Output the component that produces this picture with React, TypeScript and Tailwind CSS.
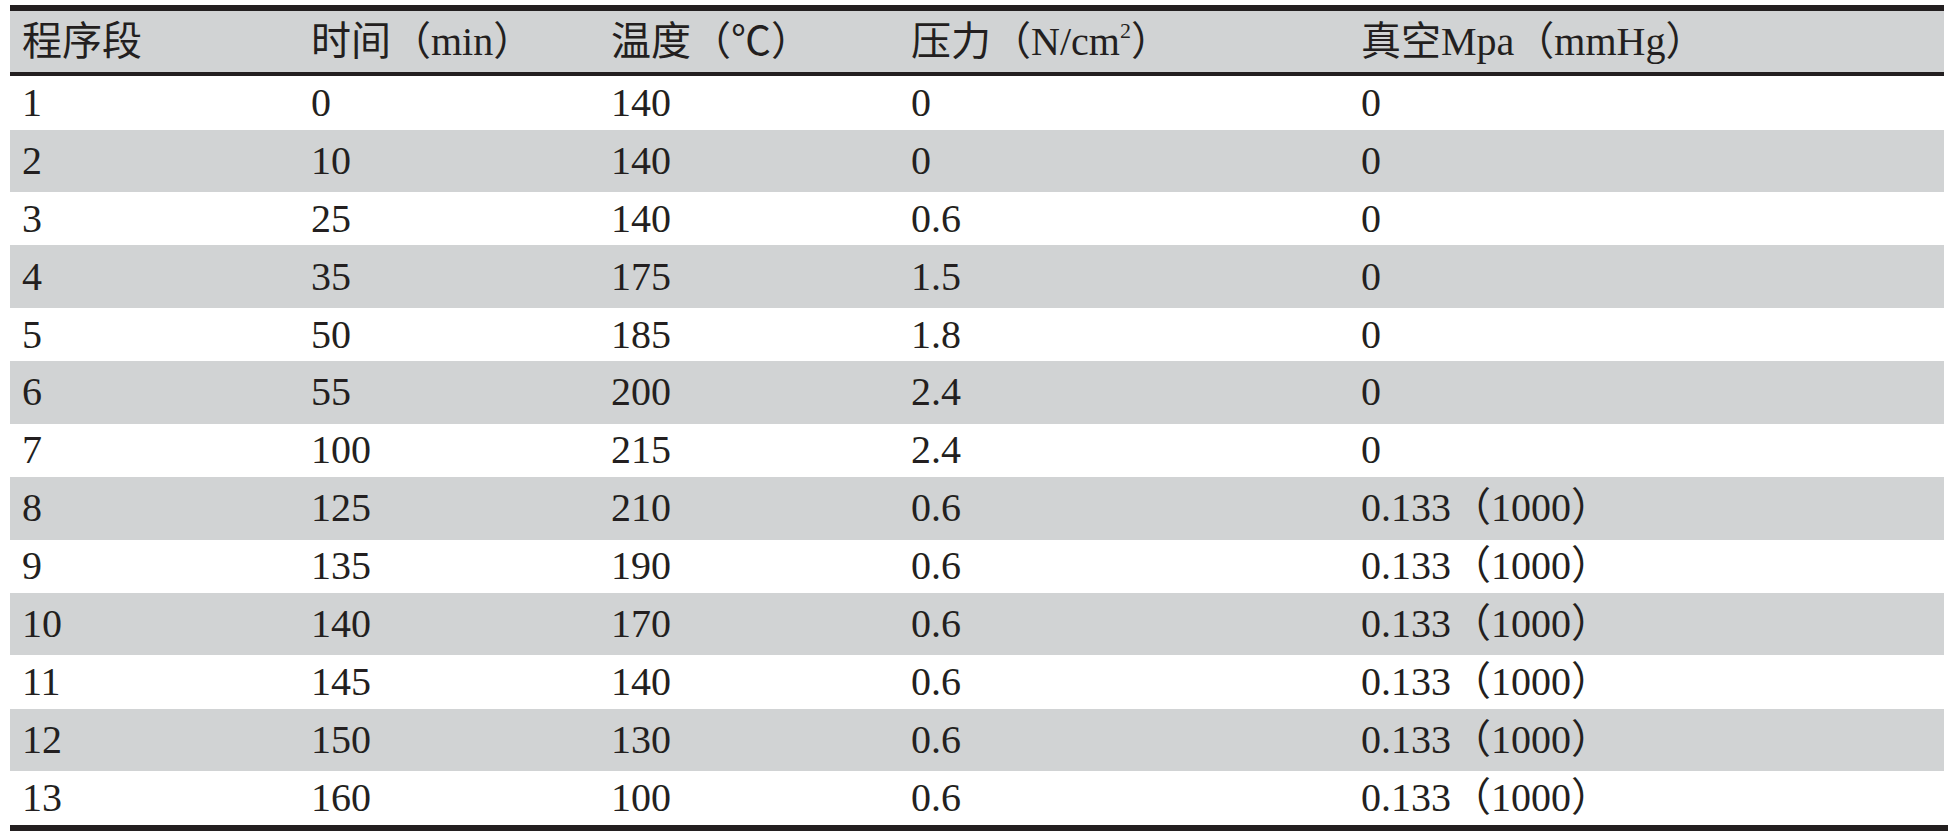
import React from "react";

const rows: [string, string, string, string, string][] = [
  ["1", "0", "140", "0", "0"],
  ["2", "10", "140", "0", "0"],
  ["3", "25", "140", "0.6", "0"],
  ["4", "35", "175", "1.5", "0"],
  ["5", "50", "185", "1.8", "0"],
  ["6", "55", "200", "2.4", "0"],
  ["7", "100", "215", "2.4", "0"],
  ["8", "125", "210", "0.6", "0.133（1000）"],
  ["9", "135", "190", "0.6", "0.133（1000）"],
  ["10", "140", "170", "0.6", "0.133（1000）"],
  ["11", "145", "140", "0.6", "0.133（1000）"],
  ["12", "150", "130", "0.6", "0.133（1000）"],
  ["13", "160", "100", "0.6", "0.133（1000）"],
];

const colW = ["w-[289px]", "w-[300px]", "w-[300px]", "w-[450px]", "flex-1"];

function Row({ cells, gray }: { cells: React.ReactNode[]; gray: boolean }) {
  return (
    <div
      className={`flex items-center ${gray ? "h-[62.4px] bg-[#d1d3d4]" : "h-[53.5px] bg-white"}`}
    >
      {cells.map((c, i) => (
        <div key={i} className={`${colW[i]} pl-[12px] whitespace-nowrap`}>
          {c}
        </div>
      ))}
    </div>
  );
}

export default function App() {
  const header: React.ReactNode[] = [
    "程序段",
    "时间（min）",
    "温度（℃）",
    <span key="p">
      压力（N/cm<sup className="relative top-[-2px] align-super text-[22px] leading-none">2</sup>）
    </span>,
    "真空Mpa（mmHg）",
  ];
  return (
    <div
      className="w-[1958px] h-[833px] bg-white pt-[5px] pl-[10px] text-[40px] leading-none text-[#231f20]"
      style={{ fontFamily: '"Liberation Serif", "Noto Sans CJK SC", serif' }}
    >
      <div className="w-[1934px]">
        <div className="h-[6px] bg-[#231f20]" />
        <div className="flex h-[61px] items-center bg-[#d1d3d4]">
          {header.map((c, i) => (
            <div key={i} className={`${colW[i]} pl-[12px] whitespace-nowrap`}>
              {c}
            </div>
          ))}
        </div>
        <div className="h-[4px] bg-[#231f20]" />
        {rows.map((r, i) => (
          <Row key={i} cells={r} gray={i % 2 === 1} />
        ))}
        <div className="h-[6px] w-[1938px] bg-[#231f20]" />
      </div>
    </div>
  );
}
